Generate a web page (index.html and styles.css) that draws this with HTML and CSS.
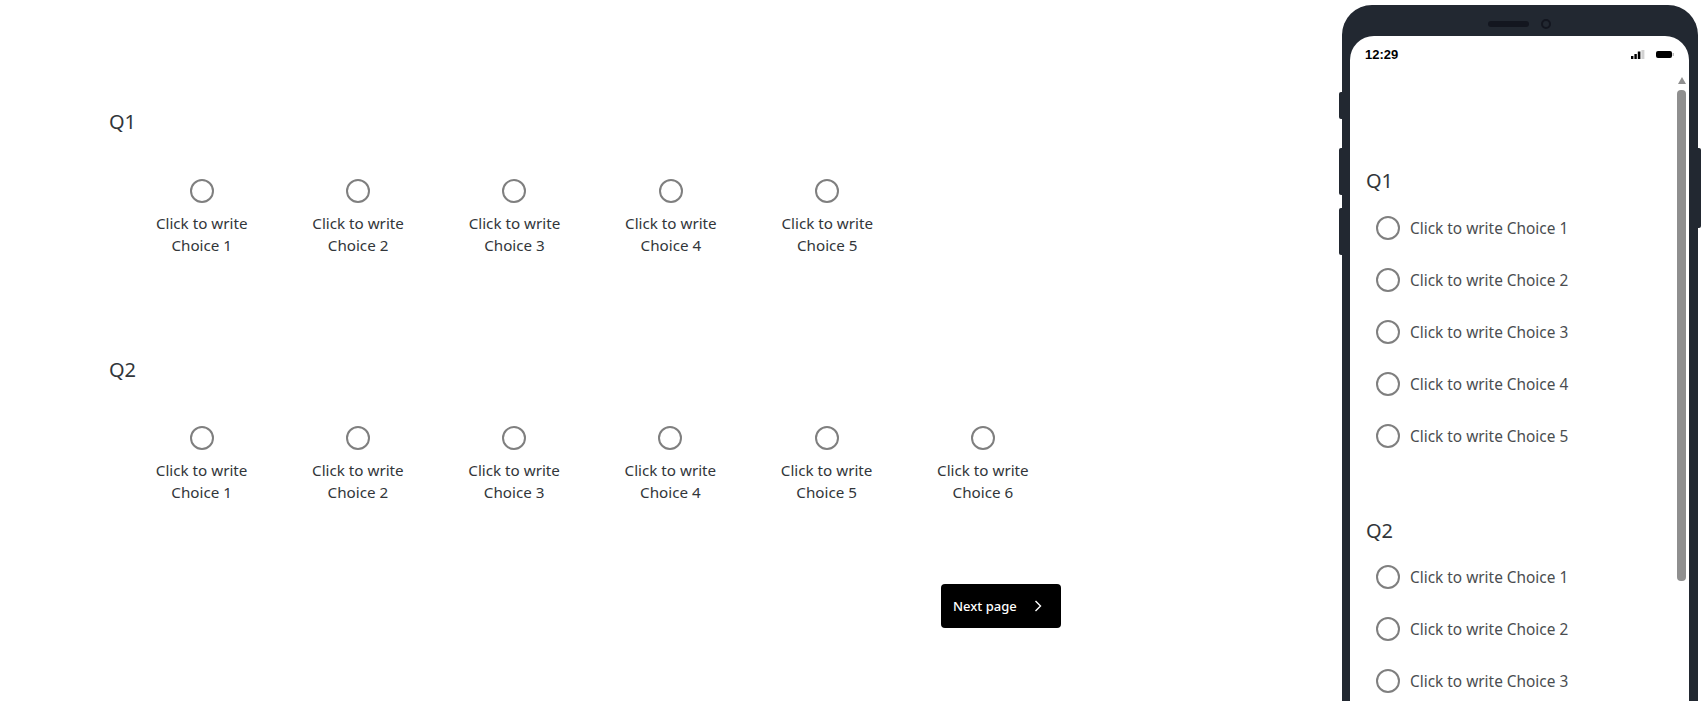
FILE: index.html
```html
<!DOCTYPE html>
<html>
<head>
    <title>Survey preview</title>
    <link rel="stylesheet" href="styles.css">
</head>
<body>
    <div class="page">
        <main class="survey">
            <section class="question">
                <h2 class="question-title">Q1</h2>
                <div class="choices">
                    <label class="choice"><span class="radio"></span><span>Click to write<br>Choice 1</span></label>
                    <label class="choice"><span class="radio"></span><span>Click to write<br>Choice 2</span></label>
                    <label class="choice"><span class="radio"></span><span>Click to write<br>Choice 3</span></label>
                    <label class="choice"><span class="radio"></span><span>Click to write<br>Choice 4</span></label>
                    <label class="choice"><span class="radio"></span><span>Click to write<br>Choice 5</span></label>
                </div>
            </section>
            <section class="question">
                <h2 class="question-title">Q2</h2>
                <div class="choices">
                    <label class="choice"><span class="radio"></span><span>Click to write<br>Choice 1</span></label>
                    <label class="choice"><span class="radio"></span><span>Click to write<br>Choice 2</span></label>
                    <label class="choice"><span class="radio"></span><span>Click to write<br>Choice 3</span></label>
                    <label class="choice"><span class="radio"></span><span>Click to write<br>Choice 4</span></label>
                    <label class="choice"><span class="radio"></span><span>Click to write<br>Choice 5</span></label>
                    <label class="choice"><span class="radio"></span><span>Click to write<br>Choice 6</span></label>
                </div>
            </section>
            <div class="actions">
                <button class="next-button" type="button">
                    Next page
                    <svg width="8" height="12" viewBox="0 0 8 12"><path d="M1.5 1l5 5-5 5" fill="none" stroke="#fff" stroke-width="1.4"/></svg>
                </button>
            </div>
        </main>

        <aside class="phone">
            <span class="side-btn side-mute"></span>
            <span class="side-btn side-vol-up"></span>
            <span class="side-btn side-vol-down"></span>
            <span class="side-btn side-power"></span>
            <div class="phone-top">
                <span class="speaker"></span>
                <span class="camera"></span>
            </div>
            <div class="screen">
                <div class="status-bar">
                    <span class="clock">12:29</span>
                    <span class="status-icons">
                        <svg width="14" height="9" viewBox="0 0 14 9">
                            <rect x="0" y="6" width="2.4" height="3" fill="#000"/>
                            <rect x="3.4" y="4" width="2.4" height="5" fill="#000"/>
                            <rect x="6.8" y="1.5" width="2.6" height="7.5" fill="#000"/>
                            <rect x="10.4" y="0" width="3" height="9" fill="#d2d2d2"/>
                        </svg>
                        <svg width="18" height="7" viewBox="0 0 18 7">
                            <rect x="0" y="0" width="16" height="7" rx="2" fill="#000"/>
                            <rect x="16.5" y="2" width="1.5" height="3" fill="#bbb"/>
                        </svg>
                    </span>
                </div>
                <div class="screen-body">
                    <div class="mobile-survey">
                        <section class="mobile-question">
                            <h2 class="question-title">Q1</h2>
                            <label class="mobile-choice"><span class="radio"></span>Click to write Choice 1</label>
                            <label class="mobile-choice"><span class="radio"></span>Click to write Choice 2</label>
                            <label class="mobile-choice"><span class="radio"></span>Click to write Choice 3</label>
                            <label class="mobile-choice"><span class="radio"></span>Click to write Choice 4</label>
                            <label class="mobile-choice"><span class="radio"></span>Click to write Choice 5</label>
                        </section>
                        <section class="mobile-question">
                            <h2 class="question-title">Q2</h2>
                            <label class="mobile-choice"><span class="radio"></span>Click to write Choice 1</label>
                            <label class="mobile-choice"><span class="radio"></span>Click to write Choice 2</label>
                            <label class="mobile-choice"><span class="radio"></span>Click to write Choice 3</label>
                        </section>
                    </div>
                    <div class="scrollbar">
                        <span class="scroll-arrow"></span>
                        <span class="scroll-thumb"></span>
                    </div>
                </div>
            </div>
        </aside>
    </div>
</body>
</html>
```

FILE: styles.css
```css
html, body {
    margin: 0;
    height: 100%;
    overflow: hidden;
    background: #fff;
}

body {
    font-family: "Noto Sans", "Open Sans", sans-serif;
    color: #32363a;
}

.page {
    display: flex;
    justify-content: space-between;
    height: 701px;
    overflow: hidden;
}

/* Desktop survey */
.survey {
    width: 953px;
    padding: 108px 0 0 108px;
    box-sizing: content-box;
}

.question {
    height: 248px;
}

.question + .question .choices {
    margin-top: 42px;
}

.question-title {
    margin: 0 0 0 1px;
    font-size: 20px;
    font-weight: 400;
    line-height: 28px;
}

.choices {
    display: flex;
    margin: 43px 0 0 15.5px;
}

.choice {
    display: flex;
    flex-direction: column;
    align-items: center;
    gap: 9px;
    width: 156.4px;
    font-size: 15.2px;
    line-height: 22px;
    text-align: center;
}

.radio {
    display: block;
    flex: none;
    width: 20px;
    height: 20px;
    border: 2px solid #7f7f7f;
    border-radius: 50%;
}

.actions {
    display: flex;
    justify-content: flex-end;
    margin-top: -20px;
}

.next-button {
    display: flex;
    align-items: center;
    gap: 17px;
    height: 44px;
    width: 120px;
    padding: 0 0 0 12px;
    border: 0;
    border-radius: 4px;
    background: #000;
    color: #fff;
    font-family: inherit;
    font-size: 13px;
    font-weight: 500;
}

/* Phone preview */
.phone {
    position: relative;
    width: 356px;
    height: 760px;
    margin: 5px 10px 0 0;
    background: #222831;
    border-radius: 30px 30px 0 0;
    padding: 0 9px 0 8px;
    box-sizing: border-box;
}

.side-btn {
    position: absolute;
    width: 3px;
    background: #222831;
}

.side-mute {
    left: -3px;
    top: 87px;
    height: 27px;
    border-radius: 2px 0 0 2px;
}

.side-vol-up {
    left: -3px;
    top: 143px;
    height: 47px;
    border-radius: 2px 0 0 2px;
}

.side-vol-down {
    left: -3px;
    top: 203px;
    height: 47px;
    border-radius: 2px 0 0 2px;
}

.side-power {
    right: -3px;
    top: 143px;
    height: 80px;
    border-radius: 0 2px 2px 0;
}

.phone-top {
    display: flex;
    justify-content: center;
    align-items: center;
    gap: 12px;
    height: 31px;
    padding-top: 6px;
    box-sizing: border-box;
}

.speaker {
    width: 41px;
    height: 6px;
    border-radius: 3px;
    background: #13161f;
}

.camera {
    width: 6px;
    height: 6px;
    border: 2px solid #13161f;
    border-radius: 50%;
}

.screen {
    height: 729px;
    background: #fff;
    border-radius: 24px 24px 0 0;
}

.status-bar {
    display: flex;
    justify-content: space-between;
    align-items: center;
    height: 28px;
    padding: 4px 15px 0;
}

.clock {
    font-family: "Liberation Sans", sans-serif;
    font-size: 13px;
    font-weight: 700;
    color: #000;
}

.status-icons {
    display: flex;
    align-items: center;
    gap: 11px;
}

.screen-body {
    display: flex;
    justify-content: space-between;
}

.mobile-survey {
    padding: 99px 0 0 15px;
}

.mobile-question {
    height: 350px;
}

.mobile-question .question-title {
    margin-bottom: 7px;
}

.mobile-question + .mobile-question .question-title {
    margin-bottom: 6px;
}

.mobile-choice {
    display: flex;
    align-items: center;
    gap: 10px;
    height: 52px;
    margin-left: 11px;
    font-size: 15.4px;
    color: #4a4d50;
}

.scrollbar {
    display: flex;
    flex-direction: column;
    align-items: center;
    width: 9px;
    margin: 9px 3px 0 0;
}

.scroll-arrow {
    width: 0;
    height: 0;
    border-left: 4.5px solid transparent;
    border-right: 4.5px solid transparent;
    border-bottom: 7px solid #8f8f8f;
}

.scroll-thumb {
    width: 9px;
    height: 491px;
    margin-top: 6px;
    border-radius: 4px;
    background: #8f8f8f;
}
```
